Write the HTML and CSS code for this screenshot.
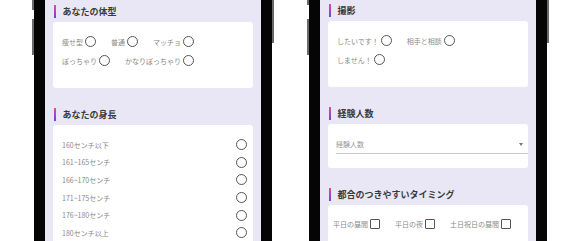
FILE: index.html
```html
<!DOCTYPE html>
<html lang="ja">
<head>
<meta charset="utf-8">
<link rel="stylesheet" href="styles.css">
</head>
<body>
<div class="stage">
  <div class="phone">
    <span class="btn btn-left btn-a"></span>
    <span class="btn btn-left btn-b"></span>
    <span class="btn btn-right btn-c"></span>
    <div class="screen screen-left">
      <div class="sec-title"><span class="bar"></span><span class="sec-text">あなたの体型</span></div>
      <div class="card card-choices">
        <div class="choice-row">
          <label class="choice">痩せ型<span class="radio"></span></label>
          <label class="choice">普通<span class="radio"></span></label>
          <label class="choice">マッチョ<span class="radio"></span></label>
        </div>
        <div class="choice-row">
          <label class="choice">ぽっちゃり<span class="radio"></span></label>
          <label class="choice">かなりぽっちゃり<span class="radio"></span></label>
        </div>
      </div>
      <div class="sec-title"><span class="bar"></span><span class="sec-text">あなたの身長</span></div>
      <div class="card card-list">
        <div class="list-row"><span>160センチ以下</span><span class="radio"></span></div>
        <div class="list-row"><span>161~165センチ</span><span class="radio"></span></div>
        <div class="list-row"><span>166~170センチ</span><span class="radio"></span></div>
        <div class="list-row"><span>171~175センチ</span><span class="radio"></span></div>
        <div class="list-row"><span>176~180センチ</span><span class="radio"></span></div>
        <div class="list-row"><span>180センチ以上</span><span class="radio"></span></div>
      </div>
    </div>
  </div>
  <div class="phone">
    <span class="btn btn-left btn-d"></span>
    <span class="btn btn-left btn-b"></span>
    <span class="btn btn-right btn-c"></span>
    <div class="screen screen-right">
      <div class="sec-title"><span class="bar"></span><span class="sec-text">撮影</span></div>
      <div class="card card-choices">
        <div class="choice-row">
          <label class="choice">したいです！<span class="radio"></span></label>
          <label class="choice">相手と相談<span class="radio"></span></label>
        </div>
        <div class="choice-row">
          <label class="choice">しません！<span class="radio"></span></label>
        </div>
      </div>
      <div class="sec-title"><span class="bar"></span><span class="sec-text">経験人数</span></div>
      <div class="card card-select">
        <div class="select-field"><span>経験人数</span><span class="caret"></span></div>
      </div>
      <div class="sec-title"><span class="bar"></span><span class="sec-text">都合のつきやすいタイミング</span></div>
      <div class="card card-checks">
        <div class="choice-row">
          <label class="choice">平日の昼間<span class="check"></span></label>
          <label class="choice">平日の夜<span class="check"></span></label>
          <label class="choice">土日祝日の昼間<span class="check"></span></label>
        </div>
      </div>
    </div>
  </div>
</div>
</body>
</html>
```
FILE: styles.css
```css
* { box-sizing: border-box; }
html, body {
  margin: 0;
  padding: 0;
  background: #ffffff;
  height: 241px;
  overflow: hidden;
}
body {
  font-family: "Noto Sans CJK JP", "Noto Sans", sans-serif;
}
.stage {
  display: flex;
  gap: 37px;
  padding-left: 34px;
  height: 241px;
}
.phone {
  position: relative;
  width: 238px;
  height: 241px;
  border-left: 11px solid #050505;
  border-right: 11px solid #050505;
  flex: none;
}
.btn {
  position: absolute;
  width: 2px;
  background: #6a6a6a;
}
.btn-left { left: -13px; }
.btn-right { right: -13px; }
.btn-a { top: 0; height: 10px; }
.btn-d { top: 0; height: 5px; }
.btn-b { top: 19px; height: 36px; }
.btn-c { top: 0; height: 43px; }

.screen {
  height: 241px;
  background: #e9e7f6;
  padding: 5px 8px 0 8px;
  overflow: hidden;
}
.screen-right { padding-top: 4px; }

.sec-title {
  display: flex;
  align-items: center;
  height: 13px;
  margin-bottom: 4px;
}
.bar {
  width: 2.5px;
  height: 13px;
  background: linear-gradient(#e8489a, #6a44dc);
  margin-right: 6.5px;
  margin-left: 0.5px;
}
.sec-text {
  font-size: 9px;
  font-weight: 700;
  color: #3a3a3a;
  line-height: 13px;
  white-space: nowrap;
}
.card {
  background: #ffffff;
  border-radius: 3px;
  margin-bottom: 20px;
}
.card-choices {
  height: 66px;
  padding: 10px 9px 0 9px;
}
.choice-row {
  display: flex;
  align-items: center;
  height: 19px;
}
.choice {
  display: flex;
  align-items: center;
  gap: 2px;
  margin-right: 15px;
  font-size: 7px;
  color: #8a8a8a;
  line-height: 10px;
  white-space: nowrap;
  flex: none;
}
.radio {
  display: inline-block;
  width: 11px;
  height: 11px;
  border: 1.4px solid #555;
  border-radius: 50%;
  flex: none;
}
.check {
  display: inline-block;
  width: 10px;
  height: 10px;
  border: 1.5px solid #555;
  border-radius: 1px;
  flex: none;
}
.card-list {
  padding: 11px 6px 0 9px;
  height: 130px;
}
.list-row {
  display: flex;
  align-items: center;
  justify-content: space-between;
  height: 17.6px;
  font-size: 7px;
  color: #8a8a8a;
  white-space: nowrap;
}
.card-select {
  height: 44px;
  padding: 15px 0 0 8px;
}
.select-field {
  display: flex;
  align-items: center;
  justify-content: space-between;
  height: 15px;
  padding-bottom: 4px;
  padding-right: 5px;
  border-bottom: 1px solid #c9c9c9;
  font-size: 7px;
  color: #999;
  line-height: 10px;
}
.caret {
  width: 0;
  height: 0;
  border-left: 2.5px solid transparent;
  border-right: 2.5px solid transparent;
  border-top: 3px solid #777;
}
.card-checks {
  height: 60px;
  padding: 9px 5px 0 5px;
}
```
